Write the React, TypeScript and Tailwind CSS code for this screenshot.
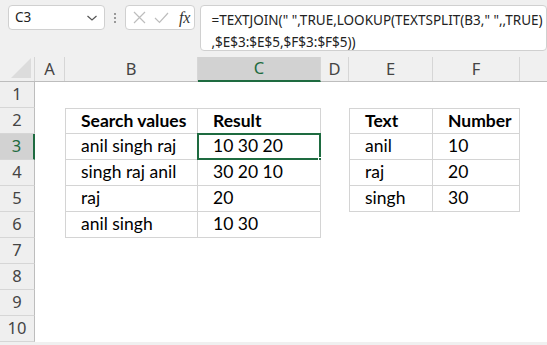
import React from "react";

const COLS = [
  { key: "A", w: 30 },
  { key: "B", w: 133 },
  { key: "C", w: 123 },
  { key: "D", w: 28 },
  { key: "E", w: 84 },
  { key: "F", w: 87 },
  { key: "", w: 60 },
];

const hdrFont = { fontFamily: '"Noto Sans", "Open Sans", sans-serif' };
const cellFont = { fontFamily: 'Lato, "Open Sans", sans-serif' };

type Cell = { text?: string; cls?: string; bold?: boolean; sel?: boolean };

function rowCells(r: number): Cell[] {
  const tb = "border-r border-b border-[#d4d4d4]";
  const left = "border-l";
  const top = "border-t";
  const data: Record<number, Cell[]> = {
    2: [
      {},
      { text: "Search values", bold: true, cls: `${tb} ${left} ${top} bg-[#ddebf7]` },
      { text: "Result", bold: true, cls: `${tb} ${top} bg-[#ddebf7]` },
      {},
      { text: "Text", bold: true, cls: `${tb} ${left} ${top} bg-[#e2efda]` },
      { text: "Number", bold: true, cls: `${tb} ${top} bg-[#e2efda]` },
      {},
    ],
    3: [
      {},
      { text: "anil singh raj", cls: `${tb} ${left}` },
      { text: "10 30 20", cls: tb, sel: true },
      {},
      { text: "anil", cls: `${tb} ${left}` },
      { text: "10", cls: tb },
      {},
    ],
    4: [
      {},
      { text: "singh raj anil", cls: `${tb} ${left}` },
      { text: "30 20 10", cls: tb },
      {},
      { text: "raj", cls: `${tb} ${left}` },
      { text: "20", cls: tb },
      {},
    ],
    5: [
      {},
      { text: "raj", cls: `${tb} ${left}` },
      { text: "20", cls: tb },
      {},
      { text: "singh", cls: `${tb} ${left}` },
      { text: "30", cls: tb },
      {},
    ],
    6: [
      {},
      { text: "anil singh", cls: `${tb} ${left}` },
      { text: "10 30", cls: tb },
      {},
      {},
      {},
      {},
    ],
  };
  return data[r] ?? COLS.map(() => ({}));
}

export default function App() {
  return (
    <div className="w-[547px] h-[345px] overflow-hidden bg-[#f0f0f0] relative">
      {/* Formula bar */}
      <div className="flex items-start h-[57px] pt-[5px] pl-[8px]" style={hdrFont}>
        <div className="w-[100px] h-[25px] bg-white border border-[#d0d0d0] rounded-[4px] flex items-center justify-between pl-[6px] pr-[6px]">
          <span className="text-[13.5px] text-[#222] leading-none">C3</span>
          <svg width="12" height="8" viewBox="0 0 12 8">
            <path d="M1.5 2 L6 6 L10.5 2" fill="none" stroke="#555" strokeWidth="1.2" />
          </svg>
        </div>
        <div className="w-[21px] h-[25px] flex flex-col items-center justify-center gap-[2px]">
          <span className="w-[2px] h-[2px] bg-[#999]" />
          <span className="w-[2px] h-[2px] bg-[#999]" />
          <span className="w-[2px] h-[2px] bg-[#999]" />
        </div>
        <div className="w-[73px] h-[25px] bg-white border border-[#d0d0d0] rounded-[4px] flex items-center pl-[7px] gap-[8px]">
          <svg width="13" height="13" viewBox="0 0 13 13">
            <path d="M1 1 L12 12 M12 1 L1 12" stroke="#bdbdbd" strokeWidth="1.2" />
          </svg>
          <svg width="15" height="12" viewBox="0 0 15 12">
            <path d="M1 6 L5.5 10.5 L14 1" fill="none" stroke="#bdbdbd" strokeWidth="1.2" />
          </svg>
          <span className="italic text-[16px] text-[#333] leading-none ml-[2px]" style={{ fontFamily: '"Liberation Serif", serif' }}>
            fx
          </span>
        </div>
        <div className="ml-[5px] w-[360px] h-[46px] bg-white border border-[#d0d0d0] rounded-[4px] pl-[10px] pt-[3px] text-[13.5px] leading-[22px] text-[#222] whitespace-pre">
          <div>{'=TEXTJOIN(" ",TRUE,LOOKUP(TEXTSPLIT(B3," ",,TRUE)'}</div>
          <div>{",$E$3:$E$5,$F$3:$F$5))"}</div>
        </div>
      </div>

      {/* Column headers */}
      <div className="flex h-[25px] border-b border-[#bdbdbd]" style={hdrFont}>
        <div className="w-[35px] shrink-0 border-r border-[#d6d6d6] relative">
          <svg className="absolute right-[3px] bottom-[3px]" width="20" height="20" viewBox="0 0 20 20">
            <path d="M20 0 L20 20 L0 20 Z" fill="#dcdcdc" />
          </svg>
        </div>
        {COLS.map((c, i) => (
          <div
            key={i}
            style={{ width: c.w }}
            className={
              "shrink-0 flex items-center justify-center text-[16.5px] border-r border-[#d6d6d6] " +
              (c.key === "C"
                ? "bg-[#d2d2d2] text-[#1e6b40] border-b-2 border-b-[#1e6b40] -mb-[1px]"
                : "text-[#444]")
            }
          >
            {c.key}
          </div>
        ))}
      </div>

      {/* Rows */}
      {Array.from({ length: 10 }, (_, i) => i + 1).map((r) => {
        const cells = rowCells(r);
        return (
          <div key={r} className="flex h-[26px]">
            <div
              style={hdrFont}
              className={
                "w-[35px] shrink-0 flex items-center justify-center text-[16.5px] border-b border-[#d6d6d6] " +
                (r === 3
                  ? "bg-[#d2d2d2] text-[#1e6b40] border-r-2 border-r-[#1e6b40]"
                  : "bg-[#efefef] text-[#444] border-r border-r-[#bdbdbd]")
              }
            >
              {r}
            </div>
            {COLS.map((c, ci) => {
              const cell = cells[ci] || {};
              return (
                <div
                  key={ci}
                  style={{ width: c.w, ...cellFont }}
                  className={
                    "shrink-0 bg-white flex items-center pl-[15px] text-[17.5px] text-black relative " +
                    (cell.bold ? "font-bold " : "") +
                    (cell.cls ?? "")
                  }
                >
                  {cell.text}
                  {cell.sel && (
                    <>
                      <div className="absolute left-[-1px] top-[-1px] right-[-1px] bottom-[-1px] border-2 border-[#1e6b40]" />
                      <div className="absolute right-[-4px] bottom-[-4px] w-[6px] h-[6px] bg-[#1e6b40] border border-white" />
                    </>
                  )}
                </div>
              );
            })}
          </div>
        );
      })}
    </div>
  );
}
